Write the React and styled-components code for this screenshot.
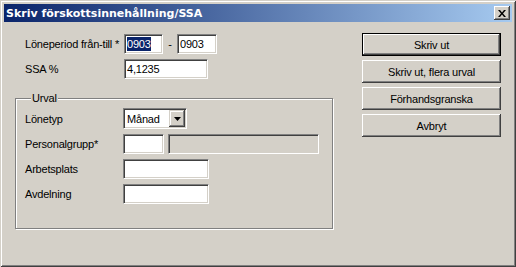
import React from 'react'
import styled, { createGlobalStyle } from 'styled-components'

const GlobalStyle = createGlobalStyle`
  html, body {
    margin: 0;
    padding: 0;
    background: #d4d0c8;
  }
  body {
    font-family: "Liberation Sans", Arial, sans-serif;
    font-size: 11px;
    letter-spacing: -0.2px;
    color: #000;
  }
`

const Window = styled.div`
  box-sizing: border-box;
  width: 516px;
  height: 267px;
  padding: 4px;
  background: #d4d0c8;
  display: flex;
  flex-direction: column;
  box-shadow: inset 1px 1px 0 #d4d0c8, inset -1px -1px 0 #404040,
    inset 2px 2px 0 #fff, inset -2px -2px 0 #808080;
`

const TitleBar = styled.div`
  height: 18px;
  flex: none;
  display: flex;
  align-items: center;
  justify-content: space-between;
  padding: 0 2px 0 2px;
  background: linear-gradient(to right, #0a246a, #a6caf0);
`

const Title = styled.span`
  font-family: "DejaVu Sans", Tahoma, sans-serif;
  font-weight: bold;
  font-size: 11px;
  letter-spacing: 0;
  color: #fff;
  white-space: nowrap;
`

const CloseButton = styled.div`
  box-sizing: border-box;
  width: 16px;
  height: 14px;
  background: #d4d0c8;
  display: flex;
  align-items: center;
  justify-content: center;
  box-shadow: inset -1px -1px 0 #404040, inset 1px 1px 0 #fff,
    inset -2px -2px 0 #808080;
`

const Body = styled.div`
  flex: 1;
  display: flex;
  justify-content: space-between;
  align-items: flex-start;
  padding: 11px 11px 0 11px;
`

const LeftColumn = styled.div`
  width: 318px;
  margin-top: 1px;
  display: flex;
  flex-direction: column;
`

const FormGrid = styled.div`
  display: grid;
  grid-template-columns: ${p => p.$label}px auto;
  row-gap: 5px;
  align-items: center;
  padding-left: ${p => p.$indent}px;
`

const Label = styled.div`
  height: 20px;
  display: flex;
  align-items: center;
  white-space: nowrap;
`

const Cell = styled.div`
  display: flex;
  align-items: center;
  gap: ${p => p.$gap || 0}px;
`

const Field = styled.div`
  box-sizing: border-box;
  width: ${p => p.$w}px;
  height: ${p => p.$h || 20}px;
  background: ${p => (p.$disabled ? '#d4d0c8' : '#fff')};
  border: 1px solid;
  border-color: #808080 #fff #fff #808080;
  box-shadow: inset 1px 1px 0 #404040, inset -1px -1px 0 #d4d0c8;
  padding: 0 2px;
  display: flex;
  align-items: center;
  white-space: nowrap;
`

const Selected = styled.span`
  background: #0a246a;
  color: #fff;
  padding: 1px 0;
`

const Dash = styled.span`
  width: 14px;
  text-align: center;
`

const Group = styled.fieldset`
  box-sizing: border-box;
  width: 318px;
  margin: 13px 0 0 0;
  padding: 3px 0 24px 9px;
  min-width: 0;
  border: 1px solid #808080;
  box-shadow: inset 1px 1px 0 #fff, 1px 1px 0 #fff;
`

const Legend = styled.legend`
  margin-left: 6px;
  padding: 0 1px;
  line-height: 13px;
  background: #d4d0c8;
`

const ComboText = styled.span`
  flex: 1;
  padding-left: 1px;
`

const ComboButton = styled.div`
  box-sizing: border-box;
  width: 16px;
  height: 17px;
  background: #d4d0c8;
  display: flex;
  align-items: center;
  justify-content: center;
  margin-right: -1px;
  box-shadow: inset -1px -1px 0 #404040, inset 1px 1px 0 #d4d0c8,
    inset -2px -2px 0 #808080, inset 2px 2px 0 #fff;
`

const ButtonColumn = styled.div`
  width: 139px;
  display: flex;
  flex-direction: column;
  gap: 4px;
`

const Button = styled.div`
  box-sizing: border-box;
  height: 23px;
  display: flex;
  align-items: center;
  justify-content: center;
  background: #d4d0c8;
  white-space: nowrap;
  border: ${p => (p.$default ? '1px solid #000' : 'none')};
  box-shadow: inset -1px -1px 0 #404040, inset 1px 1px 0 #fff,
    inset -2px -2px 0 #808080;
`

const CloseIcon = () => (
  <svg width="8" height="7" viewBox="0 0 8 7">
    <path d="M0 0h2l2 2.5L6 0h2L5 3.5 8 7H6L4 4.5 2 7H0l3-3.5z" fill="#000" />
  </svg>
)

const ArrowIcon = () => (
  <svg width="7" height="4" viewBox="0 0 7 4">
    <path d="M0 0h7L3.5 4z" fill="#000" />
  </svg>
)

export default function App() {
  return (
    <>
      <GlobalStyle />
      <Window>
        <TitleBar>
          <Title>Skriv förskottsinnehållning/SSA</Title>
          <CloseButton>
            <CloseIcon />
          </CloseButton>
        </TitleBar>
        <Body>
          <LeftColumn>
            <FormGrid $label={99} $indent={10}>
              <Label>Löneperiod från-till *</Label>
              <Cell>
                <Field $w={39}>
                  <Selected>0903</Selected>
                </Field>
                <Dash>-</Dash>
                <Field $w={40}>0903</Field>
              </Cell>
              <Label>SSA %</Label>
              <Cell>
                <Field $w={84}>4,1235</Field>
              </Cell>
            </FormGrid>
            <Group>
              <Legend>Urval</Legend>
              <FormGrid $label={98} $indent={0}>
                <Label>Lönetyp</Label>
                <Cell>
                  <Field $w={64} $h={21}>
                    <ComboText>Månad</ComboText>
                    <ComboButton>
                      <ArrowIcon />
                    </ComboButton>
                  </Field>
                </Cell>
                <Label>Personalgrupp*</Label>
                <Cell $gap={4}>
                  <Field $w={41} />
                  <Field $w={151} $disabled />
                </Cell>
                <Label>Arbetsplats</Label>
                <Cell>
                  <Field $w={86} />
                </Cell>
                <Label>Avdelning</Label>
                <Cell>
                  <Field $w={86} />
                </Cell>
              </FormGrid>
            </Group>
          </LeftColumn>
          <ButtonColumn>
            <Button $default>Skriv ut</Button>
            <Button>Skriv ut, flera urval</Button>
            <Button>Förhandsgranska</Button>
            <Button>Avbryt</Button>
          </ButtonColumn>
        </Body>
      </Window>
    </>
  )
}
